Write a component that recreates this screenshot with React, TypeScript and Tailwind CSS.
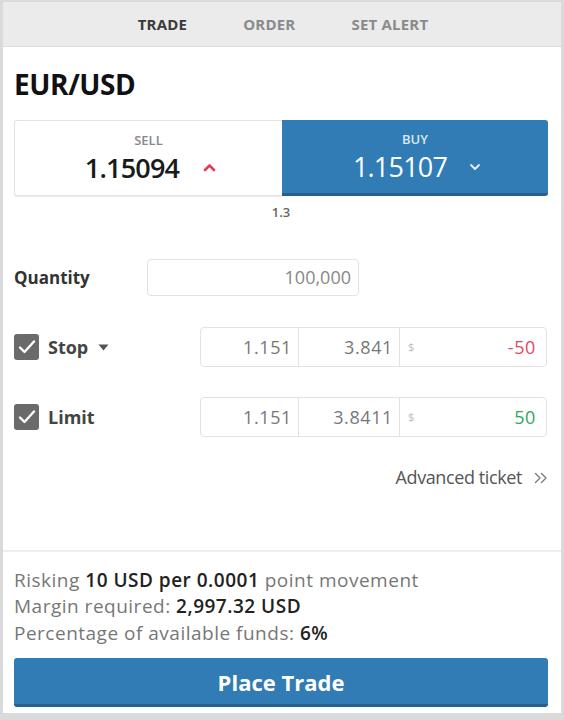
import React from "react";

const font = { fontFamily: '"Open Sans", "Liberation Sans", sans-serif' };

function Check() {
  return (
    <span className="flex h-[26px] w-[25px] items-center justify-center rounded-[3px] bg-[#6a6a6a]">
      <svg width="18" height="16" viewBox="0 0 18 16" fill="none">
        <path d="M2 8.5l4.5 4.5L16 2.5" stroke="white" strokeWidth="2.4" strokeLinecap="round" strokeLinejoin="round" />
      </svg>
    </span>
  );
}

function PriceGroup({ a, b, amount, color }: { a: string; b: string; amount: string; color: string }) {
  return (
    <div className="flex h-[40px] w-[347px] rounded-[4px] border border-[#e2e2e2] text-[18px] tracking-[0.6px] text-[#777]">
      <div className="flex w-[98px] items-center justify-end border-r border-[#e2e2e2] pr-[6px]">{a}</div>
      <div className="flex w-[101px] items-center justify-end border-r border-[#e2e2e2] pr-[6px]">{b}</div>
      <div className="flex flex-1 items-center justify-between pl-[8px] pr-[10px]">
        <span className="text-[11px] text-[#bbb]">$</span>
        <span className={color}>{amount}</span>
      </div>
    </div>
  );
}

export default function App() {
  return (
    <div style={font} className="flex h-[720px] w-[564px] flex-col border-x-[3px] border-t-2 border-b-[7px] border-[#dadada] bg-white">
      <div className="flex h-[45px] shrink-0 items-center justify-center gap-[56px] border-b border-[#dedede] bg-[#ebebeb] pl-[2px] text-[15px] font-bold uppercase tracking-[0.2px]">
        <span className="text-[#3a3a3a]">Trade</span>
        <span className="text-[#8a8a8a]">Order</span>
        <span className="text-[#8a8a8a]">Set Alert</span>
      </div>

      <div className="flex flex-1 flex-col pl-[11px] pr-[13px]">
        <h1 className="mt-[21px] text-[28px] font-bold leading-[32px] tracking-[-0.4px] text-[#111]">EUR/USD</h1>

        <div className="mt-[20px] flex h-[76px]">
          <div className="flex w-[268px] flex-col items-center justify-center rounded-l-[3px] border border-r-0 border-[#e3e3e3] shadow-[0_1px_1px_rgba(0,0,0,0.08)]">
            <span className="text-[13px] font-semibold leading-[18px] text-[#888]">SELL</span>
            <div className="flex items-center">
              <span className="ml-[4px] text-[27px] font-semibold leading-[37px] tracking-[-0.8px] text-[#1a1a1a]">1.15094</span>
              <svg className="ml-[24px]" width="13" height="9" viewBox="0 0 13 9" fill="none">
                <path d="M2 7l4.5-4.5L11 7" stroke="#e23b55" strokeWidth="2.6" strokeLinecap="round" strokeLinejoin="round" />
              </svg>
            </div>
          </div>
          <div className="flex flex-1 flex-col items-center justify-center rounded-r-[3px] border-b-[3px] border-[#24618f] bg-[#327cb5] pt-[2px]">
            <span className="text-[13px] font-semibold leading-[18px] text-[#dce9f4]">BUY</span>
            <div className="flex items-center">
              <span className="ml-[4px] text-[27px] leading-[37px] tracking-[-0.8px] text-white">1.15107</span>
              <svg className="ml-[22px]" width="12" height="8" viewBox="0 0 12 8" fill="none">
                <path d="M2 2l4 4 4-4" stroke="#e6eef6" strokeWidth="1.8" strokeLinecap="round" strokeLinejoin="round" />
              </svg>
            </div>
          </div>
        </div>

        <div className="mt-[7px] text-center text-[13px] font-semibold leading-[18px] text-[#666]">1.3</div>

        <div className="mt-[38px] flex h-[37px] items-center">
          <span className="w-[133px] text-[17px] font-bold text-[#333]">Quantity</span>
          <div className="flex h-[37px] w-[212px] items-center justify-end rounded-[4px] border border-[#e2e2e2] pr-[7px] text-[18px] text-[#888]">
            100,000
          </div>
        </div>

        <div className="mt-[31px] flex items-center">
          <div className="flex w-[186px] items-center">
            <Check />
            <span className="ml-[9px] text-[18px] font-bold text-[#444]">Stop</span>
            <svg className="ml-[10px]" width="11" height="7" viewBox="0 0 11 7">
              <path d="M0.5 0.5h10L5.5 6.5z" fill="#555" />
            </svg>
          </div>
          <PriceGroup a="1.151" b="3.841" amount="-50" color="text-[#e2485f]" />
        </div>

        <div className="mt-[30px] flex items-center">
          <div className="flex w-[186px] items-center">
            <Check />
            <span className="ml-[9px] text-[18px] font-bold text-[#444]">Limit</span>
          </div>
          <PriceGroup a="1.151" b="3.8411" amount="50" color="text-[#2fa75a]" />
        </div>

        <div className="mt-[27px] flex items-center justify-end gap-[12px] text-[18px] text-[#555]">
          <span className="tracking-[-0.4px]">Advanced ticket</span>
          <svg width="14" height="12" viewBox="0 0 14 12" fill="none">
            <path d="M1.5 1.5l4.5 4.5-4.5 4.5M7.5 1.5l4.5 4.5-4.5 4.5" stroke="#777" strokeWidth="1.3" strokeLinecap="round" strokeLinejoin="round" />
          </svg>
        </div>
      </div>

      <div className="shrink-0 border-t-2 border-[#eeeeee] pl-[11px] pr-[13px] pt-[15px] pb-[6px]">
        <div className="text-[19px] leading-[26.5px] tracking-[0.5px] text-[#777]">
          <p>
            Risking <b className="font-semibold text-[#222]">10 USD per 0.0001</b> point movement
          </p>
          <p>
            Margin required: <b className="font-semibold text-[#222]">2,997.32 USD</b>
          </p>
          <p>
            Percentage of available funds: <b className="font-semibold text-[#222]">6%</b>
          </p>
        </div>
        <button className="mt-[12px] flex h-[49px] w-full items-center justify-center rounded-[3px] border-b-[3px] border-[#24618f] bg-[#327cb5] pt-[2px] text-[22px] font-bold text-white">
          Place Trade
        </button>
      </div>
    </div>
  );
}
